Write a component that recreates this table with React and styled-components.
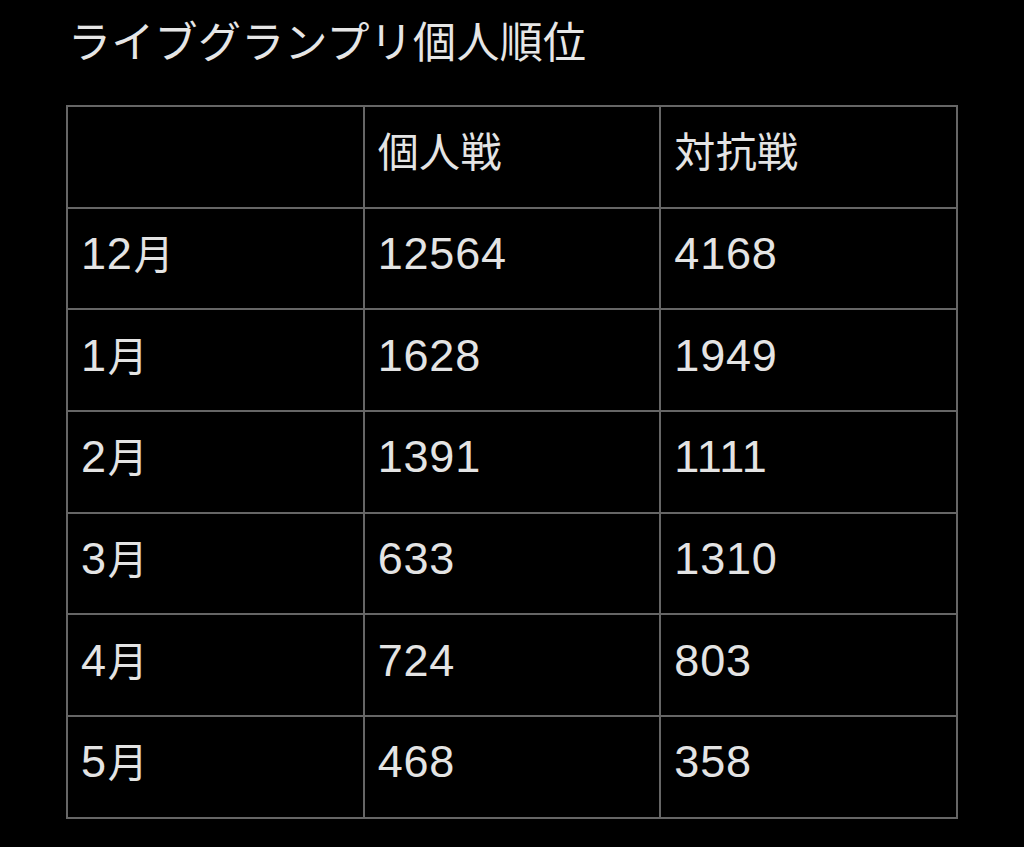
import React from "react";
import styled, { createGlobalStyle } from "styled-components";

const Global = createGlobalStyle`
  html, body { margin: 0; padding: 0; background: #000; }
  body { font-family: "Noto Sans CJK JP", "Noto Sans", sans-serif; color: #e2e2e2; }
`;

const Page = styled.div`
  width: 1024px;
  height: 847px;
  background: #000;
  padding: 8px 0 0 66px;
  box-sizing: border-box;
`;

const Title = styled.h1`
  margin: 0 0 0 2px;
  font-size: 43px;
  font-weight: 400;
  line-height: 62px;
  color: #e6e6e6;
  letter-spacing: 0.3px;
`;

const Table = styled.table`
  margin-top: 35px;
  width: 892px;
  border-collapse: collapse;
  table-layout: fixed;
`;

const Cell = styled.td`
  border: 2px solid #666;
  height: 101.7px;
  padding: 0 0 15px 13px;
  font-family: "Noto Sans CJK JP", sans-serif;
  font-size: 41px;
  font-weight: 400;
  letter-spacing: 0.4px;
  color: #e4e4e4;
  vertical-align: middle;
  box-sizing: border-box;
`;

const Num = styled.span`
  font-family: "Liberation Sans", Arial, sans-serif;
  font-size: 45px;
  letter-spacing: 0.8px;
`;

const Unit = styled.span`
  font-family: "Noto Sans CJK JP", sans-serif;
  font-size: 40px;
  margin-left: 1px;
`;

const rows = [
  [12, "12564", "4168"],
  [1, "1628", "1949"],
  [2, "1391", "1111"],
  [3, "633", "1310"],
  [4, "724", "803"],
  [5, "468", "358"],
];

export default function App() {
  return (
    <>
      <Global />
      <Page>
        <Title>ライブグランプリ個人順位</Title>
        <Table>
          <tbody>
            <tr>
              <Cell></Cell>
              <Cell>個人戦</Cell>
              <Cell>対抗戦</Cell>
            </tr>
            {rows.map((r) => (
              <tr key={r[0]}>
                <Cell>
                  <Num>{r[0]}</Num>
                  <Unit>月</Unit>
                </Cell>
                <Cell>
                  <Num>{r[1]}</Num>
                </Cell>
                <Cell>
                  <Num>{r[2]}</Num>
                </Cell>
              </tr>
            ))}
          </tbody>
        </Table>
      </Page>
    </>
  );
}
